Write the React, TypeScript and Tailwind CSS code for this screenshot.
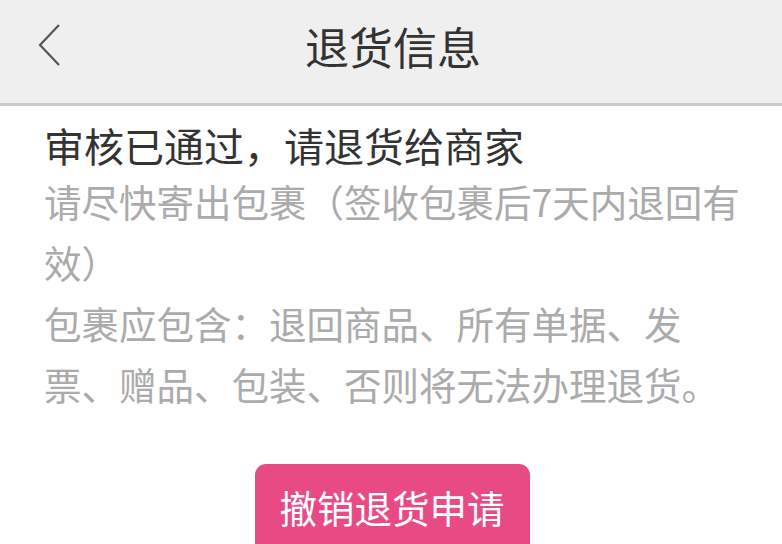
import React from 'react';

const font = { fontFamily: '"Noto Sans CJK SC", "Noto Sans", sans-serif' };

const BackIcon: React.FC = () => (
    <svg width="26" height="44" viewBox="0 0 26 44" fill="none">
        <path d="M22 2 L3 22 L22 42" stroke="#555" strokeWidth="2.2" strokeLinejoin="miter" />
    </svg>
);

const App: React.FC = () => {
    return (
        <div className="w-[782px] h-[544px] overflow-hidden bg-white" style={font}>
            <header className="relative h-[106px] bg-[#efefef] border-b-[3px] border-[#c9c9c9] flex items-center justify-center">
                <button type="button" className="absolute left-[37px] top-[23px]"><BackIcon /></button>
                <h1 className="text-[44px] leading-none text-[#333] pb-[12px] pl-[4px]">退货信息</h1>
            </header>

            <main className="pl-[44px] pr-[40px] pt-[14px]">
                <h2 className="text-[40px] leading-[50px] text-[#333]">审核已通过，请退货给商家</h2>
                <p className="text-[37.5px] leading-[61px] text-[#ababab] mt-[0px]">请尽快寄出包裹（签收包裹后7天内退回有效）</p>
                <p className="text-[37.5px] leading-[61px] text-[#ababab]">包裹应包含：退回商品、所有单据、发票、赠品、包装、否则将无法办理退货。</p>
                <div className="flex justify-center mt-[50px] pr-[2px]">
                    <button type="button" className="w-[275px] h-[90px] rounded-[11px] bg-[#e84a83] text-white text-[37.5px] leading-none pb-[4px]">
                        撤销退货申请
                    </button>
                </div>
            </main>
        </div>
    );
};

export default App;
